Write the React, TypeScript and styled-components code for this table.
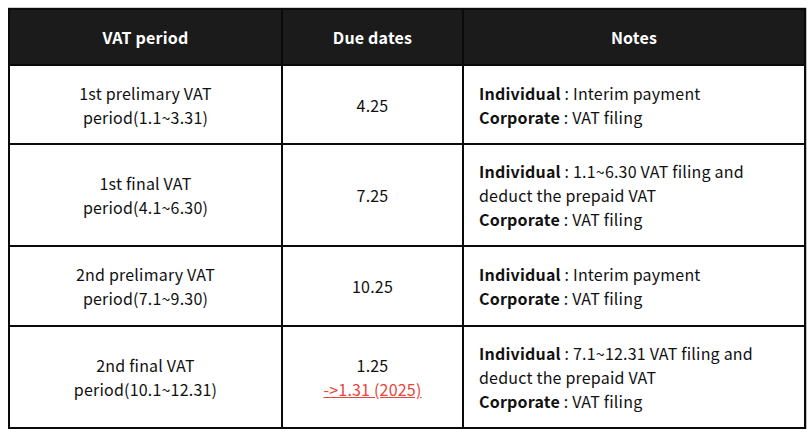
import React from "react";
import styled, { createGlobalStyle } from "styled-components";

const Global = createGlobalStyle`
  html, body { margin: 0; padding: 0; background: #ffffff; }
  body { font-family: "Noto Sans CJK KR", "Noto Sans", sans-serif; }
`;

const Page = styled.div`
  padding: 8px 0 0 8px;
`;

const Table = styled.table`
  width: 798px;
  border-collapse: separate;
  border-spacing: 0;
  table-layout: fixed;
  font-size: 16px;
  line-height: 24px;
  letter-spacing: 0.2px;
  color: #111;
  border: 2px solid #0a0a0a;
  box-shadow: 0 -1px 0 #d0d0d0, 1px 0 0 #c0c0c0;
`;

const Col = styled.col<{ $w: number }>`
  width: ${(p) => p.$w}px;
`;

const Row = styled.tr<{ $h: number }>`
  height: ${(p) => p.$h}px;
`;

const HeadCell = styled.th<{ $last?: boolean }>`
  background: #1b1b1b;
  color: #ffffff;
  font-weight: 700;
  text-align: center;
  vertical-align: middle;
  padding: 0;
  border-right: ${(p) => (p.$last ? "none" : "2px solid #0a0a0a")};
  border-bottom: 2px solid #0a0a0a;
`;

const Cell = styled.td<{ $align?: "left" | "center"; $last?: boolean; $bottom?: boolean }>`
  text-align: ${(p) => p.$align ?? "center"};
  vertical-align: middle;
  padding: 0 ${(p) => (p.$align === "left" ? "15px" : "8px")};
  border-right: ${(p) => (p.$last ? "none" : "2px solid #0a0a0a")};
  border-bottom: ${(p) => (p.$bottom ? "none" : "2px solid #0a0a0a")};
`;

const Label = styled.span`
  font-weight: 700;
`;

const Line = styled.div``;

const Changed = styled.span`
  color: #e8453c;
  text-decoration: underline;
`;

type RowData = { period: string[]; due: React.ReactNode; notes: React.ReactNode; h: number };

const rows: RowData[] = [
  {
    period: ["1st prelimary VAT", "period(1.1~3.31)"],
    due: "4.25",
    notes: (
      <>
        <Line><Label>Individual</Label> : Interim payment</Line>
        <Line><Label>Corporate</Label> : VAT filing</Line>
      </>
    ),
    h: 79,
  },
  {
    period: ["1st final VAT", "period(4.1~6.30)"],
    due: "7.25",
    notes: (
      <>
        <Line><Label>Individual</Label> : 1.1~6.30 VAT filing and</Line>
        <Line>deduct the prepaid VAT</Line>
        <Line><Label>Corporate</Label> : VAT filing</Line>
      </>
    ),
    h: 102,
  },
  {
    period: ["2nd prelimary VAT", "period(7.1~9.30)"],
    due: "10.25",
    notes: (
      <>
        <Line><Label>Individual</Label> : Interim payment</Line>
        <Line><Label>Corporate</Label> : VAT filing</Line>
      </>
    ),
    h: 80,
  },
  {
    period: ["2nd final VAT", "period(10.1~12.31)"],
    due: (
      <>
        <Line>1.25</Line>
        <Line><Changed>-&gt;1.31 (2025)</Changed></Line>
      </>
    ),
    notes: (
      <>
        <Line><Label>Individual</Label> : 7.1~12.31 VAT filing and</Line>
        <Line>deduct the prepaid VAT</Line>
        <Line><Label>Corporate</Label> : VAT filing</Line>
      </>
    ),
    h: 100,
  },
];

export default function App() {
  return (
    <Page>
      <Global />
      <Table>
        <colgroup>
          <Col $w={273} />
          <Col $w={181} />
          <Col $w={340} />
        </colgroup>
        <thead>
          <Row $h={56}>
            <HeadCell>VAT period</HeadCell>
            <HeadCell>Due dates</HeadCell>
            <HeadCell $last>Notes</HeadCell>
          </Row>
        </thead>
        <tbody>
          {rows.map((r, i) => {
            const bottom = i === rows.length - 1;
            return (
              <Row key={i} $h={r.h}>
                <Cell $bottom={bottom}>
                  {r.period.map((p) => (
                    <Line key={p}>{p}</Line>
                  ))}
                </Cell>
                <Cell $bottom={bottom}>{r.due}</Cell>
                <Cell $align="left" $last $bottom={bottom}>
                  {r.notes}
                </Cell>
              </Row>
            );
          })}
        </tbody>
      </Table>
    </Page>
  );
}
